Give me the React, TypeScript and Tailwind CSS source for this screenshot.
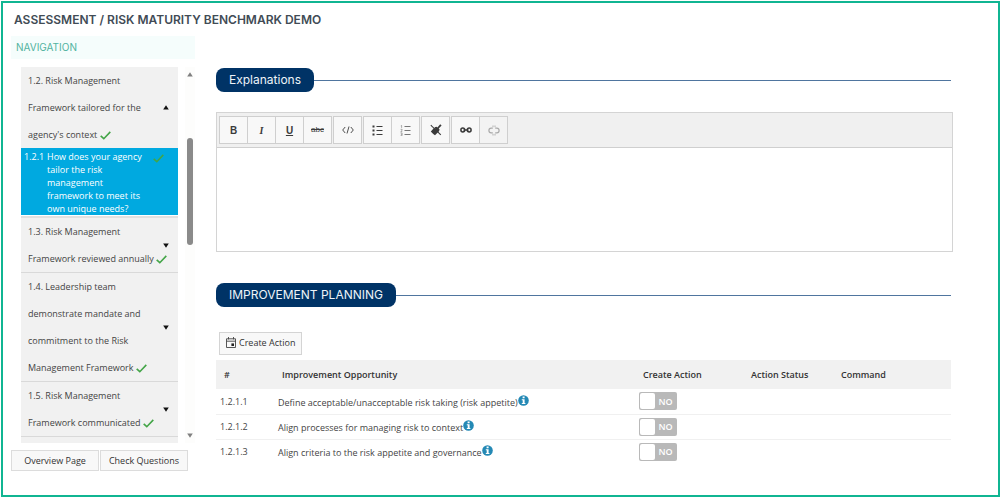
import { useState } from "react";
import type { ReactNode } from "react";

type NavItem = { id: string; lines: string[]; open?: boolean };

const NAV_ITEMS: NavItem[] = [
  { id: "1.3", lines: ["1.3. Risk Management", "Framework reviewed annually"] },
  {
    id: "1.4",
    lines: ["1.4. Leadership team", "demonstrate mandate and", "commitment to the Risk", "Management Framework"],
  },
  { id: "1.5", lines: ["1.5. Risk Management", "Framework communicated"] },
];

const ACTIONS = [
  { id: "1.2.1.1", label: "Define acceptable/unacceptable risk taking (risk appetite)" },
  { id: "1.2.1.2", label: "Align processes for managing risk to context" },
  { id: "1.2.1.3", label: "Align criteria to the risk appetite and governance" },
];

function Check({ className = "" }: { className?: string }) {
  return (
    <svg className={`inline-block shrink-0 ${className}`} width="11" height="9" viewBox="0 0 11 9" fill="none" stroke="#43a547" strokeWidth="1.6">
      <path d="M0.7 4.8 L3.8 7.7 L10.3 0.9" />
    </svg>
  );
}

function Triangle({ up = false, className = "" }: { up?: boolean; className?: string }) {
  return (
    <svg className={`shrink-0 ${className}`} width="6" height="5" viewBox="0 0 6 5" fill="currentColor">
      <path d={up ? "M3 0.3 L5.8 4.5 H0.2 Z" : "M0.2 0.5 H5.8 L3 4.7 Z"} />
    </svg>
  );
}

function NavGroup({ item }: { item: NavItem }) {
  return (
    <button
      type="button"
      aria-expanded={!!item.open}
      className={`flex w-full shrink-0 items-center justify-between bg-[#f1f1f1] pl-[7px] pr-[9px] text-left leading-[27px] text-[#444] ${item.open ? "" : "border-b border-[#d9d9d9]"}`}
    >
      <span className="whitespace-nowrap">
        {item.lines.map((line, i) => (
          <span key={line} className="block">
            {line}
            {i === item.lines.length - 1 && <> <Check /></>}
          </span>
        ))}
      </span>
      <Triangle up={item.open} className="-ml-2 text-[#111]" />
    </button>
  );
}

function SectionTitle({ children }: { children: ReactNode }) {
  return (
    <div className="mr-[2px] flex items-center">
      <h2 className="rounded-lg bg-[#003366] px-[13px] font-['Inter',sans-serif] text-[12px] leading-6 text-[#eef3f8]">
        {children}
      </h2>
      <div className="h-px flex-1 bg-[#4f759f]" />
    </div>
  );
}

function ToolGroup({ children }: { children: ReactNode }) {
  return <div className="flex gap-px border border-[#cfcfcf] bg-[#cfcfcf]">{children}</div>;
}

function Tool({ label, disabled, children }: { label: string; disabled?: boolean; children: ReactNode }) {
  return (
    <button
      type="button"
      aria-label={label}
      disabled={disabled}
      className="flex h-[26px] w-[27px] items-center justify-center bg-[#f8f8f8] text-[#3b3b3b] disabled:bg-[#f3f3f3] disabled:text-[#aaa]"
    >
      {children}
    </button>
  );
}

function Toolbar() {
  return (
    <div className="flex gap-px border-b border-[#cfcfcf] bg-[#f0f0f0] px-[2px] py-[3px]">
      <ToolGroup>
        <Tool label="Bold"><b className="font-['Liberation_Sans',sans-serif] text-[10px]">B</b></Tool>
        <Tool label="Italic"><i className="font-['Liberation_Serif',serif] text-[10px] font-bold">I</i></Tool>
        <Tool label="Underline"><b className="font-['Liberation_Sans',sans-serif] text-[10px] underline">U</b></Tool>
        <Tool label="Strikethrough"><s className="font-['Liberation_Sans',sans-serif] text-[8px]">abc</s></Tool>
      </ToolGroup>
      <ToolGroup>
        <Tool label="View HTML">
          <svg width="12" height="8" viewBox="0 0 12 8" fill="none" stroke="currentColor" strokeWidth="0.9">
            <path d="M3.2 1 L0.7 4 L3.2 7 M8.8 1 L11.3 4 L8.8 7 M7 0.5 L5 7.5" />
          </svg>
        </Tool>
      </ToolGroup>
      <ToolGroup>
        <Tool label="Bulleted list">
          <svg width="11" height="11" viewBox="0 0 11 11" fill="currentColor">
            <path d="M0.5 0.5h2v2h-2z M0.5 4.5h2v2h-2z M0.5 8.5h2v2h-2z M4.5 1h6v1h-6z M4.5 5h6v1h-6z M4.5 9h6v1h-6z" />
          </svg>
        </Tool>
        <Tool label="Numbered list">
          <svg width="11" height="11" viewBox="0 0 11 11" fill="none" stroke="#777">
            <path strokeWidth="0.6" d="M0.8 0.8 L1.6 0.4 V2.9 M0.6 4.3 H2.1 V5.4 L0.7 6.7 H2.3 M0.6 8 H2.1 V10.6 H0.6 M0.9 9.3 H2.1" />
            <path d="M4.5 1.5h6 M4.5 5.5h6 M4.5 9.5h6" />
          </svg>
        </Tool>
      </ToolGroup>
      <ToolGroup>
        <Tool label="Clean formatting">
          <svg width="12" height="12" viewBox="0 0 12 12" fill="currentColor">
            <path d="M10.2 0.3 L11.6 1.6 L8.7 4.5 L9.6 5.5 L9 7.3 L5 11.2 L3.9 10.6 L3 9.8 L2 8.8 L0.8 7.4 L4.7 3.3 L6.5 2.7 L7.4 3.5 Z" />
            <path d="M0.8 1.2 L10.8 10.9" stroke="currentColor" strokeWidth="1.1" />
            <path d="M2 1.2 L5.2 4.3" stroke="#f8f8f8" strokeWidth="0.4" />
          </svg>
        </Tool>
      </ToolGroup>
      <ToolGroup>
        <Tool label="Insert link">
          <svg width="12" height="6" viewBox="0 0 12 6" fill="none" stroke="currentColor" strokeWidth="1.5">
            <circle cx="2.8" cy="3" r="1.9" />
            <circle cx="9.2" cy="3" r="1.9" />
            <path d="M3.6 3 H8.4" />
          </svg>
        </Tool>
        <Tool label="Remove link" disabled>
          <svg width="12" height="11" viewBox="0 0 12 11" fill="none" stroke="currentColor" strokeWidth="1.2">
            <path d="M4.8 3.2 H3.2 A2.3 2.3 0 0 0 3.2 7.8 H4.8 M7.2 3.2 H8.8 A2.3 2.3 0 0 1 8.8 7.8 H7.2" />
            <path d="M5 0.5 V2.2 M7 0.5 V2.2 M5 8.8 V10.5 M7 8.8 V10.5" strokeWidth="0.9" />
          </svg>
        </Tool>
      </ToolGroup>
    </div>
  );
}

function InfoIcon() {
  return (
    <svg className="inline-block align-baseline" width="11" height="11" viewBox="0 0 11 11">
      <circle cx="5.5" cy="5.5" r="5.3" fill="#2489b5" />
      <path fill="#fff" d="M4.6 1.6h2v1.6h-2z M3.8 4.2h2.8v3.7h.8v1.1h-3.6v-1.1h.9v-2.6h-.9z" />
    </svg>
  );
}

function Toggle({ label }: { label: string }) {
  const [on, setOn] = useState(false);
  return (
    <label
      className={`relative flex h-[18px] w-[38px] cursor-pointer items-center rounded-[2px] bg-[#b9b9b9] p-px text-[9px] font-semibold text-white ${on ? "flex-row-reverse" : ""}`}
    >
      <input
        type="checkbox"
        role="switch"
        aria-label={label}
        checked={on}
        onChange={(e) => setOn(e.target.checked)}
        className="absolute inset-0 cursor-pointer opacity-0"
      />
      <span className="h-4 w-[15px] rounded-[2px] bg-white" />
      <span className="flex-1 text-center">{on ? "YES" : "NO"}</span>
    </label>
  );
}

export default function App() {
  const [text, setText] = useState("");

  return (
    <div className="min-h-screen bg-white p-px font-['Open_Sans',sans-serif] text-[9px] text-[#444]">
      <div className="min-h-[495px] border-2 border-[#10b592] pb-6">
        <h1 className="pl-[11px] pt-[7px] font-['Inter',sans-serif] text-[12px] font-semibold leading-5 text-[#414b55]">
          ASSESSMENT / RISK MATURITY BENCHMARK DEMO
        </h1>

        <div className="mt-[6px] flex gap-[21px] pl-2 pr-[45px]">
          {/* Navigation */}
          <nav className="w-[184px] shrink-0">
            <h2 className="bg-[#f5fdfc] pl-[5px] font-['Inter',sans-serif] text-[10px] leading-[23px] text-[#52b3a0]">NAVIGATION</h2>
            <div className="mt-2 flex h-[376px] justify-between pl-[10px]">
              <div className="flex w-[157px] flex-col overflow-hidden">
                <NavGroup
                  item={{ id: "1.2", open: true, lines: ["1.2. Risk Management", "Framework tailored for the", "agency's context"] }}
                />
                <a href="#q121" className="flex shrink-0 items-start bg-[#00a9e0] pl-[3px] pr-[14px] pt-[2px] font-medium text-white">
                  <span className="w-[23px] leading-[13px]">1.2.1</span>
                  <span className="mr-[6px] w-[100px] leading-[13px]">How does your agency tailor the risk management framework to meet its own unique needs?</span>
                  <Check className="mt-1" />
                </a>
                <div className="mt-px h-[2px] shrink-0 bg-[#e0e0e0]" />
                {NAV_ITEMS.map((item) => (
                  <NavGroup key={item.id} item={item} />
                ))}
                <div className="flex-1 bg-[#f1f1f1]" />
              </div>
              {/* Scroll bar */}
              <div className="flex w-[10px] flex-col items-center bg-[#fdfdfc] py-[5px] text-[#808080]">
                <Triangle up />
                <div className="mt-[61px] h-[107px] w-[6px] rounded-full bg-[#8a8a8a]" />
                <Triangle className="mt-auto" />
              </div>
            </div>
            <div className="mt-[7px] flex gap-px text-[#333]">
              <button type="button" className="h-[21px] w-[88px] whitespace-nowrap border border-[#dcdcdc] bg-[#f8f8f8]">Overview Page</button>
              <button type="button" className="h-[21px] w-[88px] whitespace-nowrap border border-[#dcdcdc] bg-[#f8f8f8]">Check Questions</button>
            </div>
          </nav>

          {/* Question details */}
          <main className="min-w-0 flex-1 pt-8">
            <SectionTitle>Explanations</SectionTitle>
            <div className="mt-5 border border-[#d4d4d4]">
              <Toolbar />
              <textarea
                aria-label="Explanations"
                value={text}
                onChange={(e) => setText(e.target.value)}
                className="block h-[103px] w-full resize-none p-2 text-[10px] outline-none"
              />
            </div>

            <div className="mt-[31px]">
              <SectionTitle>IMPROVEMENT PLANNING</SectionTitle>
            </div>
            <button type="button" className="ml-[3px] mt-[25px] flex h-[23px] items-center gap-[3px] border border-[#d4d4d4] bg-[#f8f8f8] px-[6px] pb-[2px] text-[#333]">
              <svg width="10" height="11" viewBox="0 0 10 11" fill="none" stroke="#444" strokeWidth="0.9">
                <path d="M0.5 1.8 H9.5 V10.5 H0.5 Z M0.5 4.2 H9.5 M2.5 0 V2.4 M7.5 0 V2.4" />
                <path fill="#222" stroke="none" d="M5.4 6.4h2.6v2.6h-2.6z" />
              </svg>
              Create Action
            </button>

            <div className="mr-[2px] mt-[5px]">
              <table className="w-full table-fixed border-collapse text-left">
                <colgroup>
                  <col className="w-[56px]" />
                  <col />
                  <col className="w-[108px]" />
                  <col className="w-[90px]" />
                  <col className="w-[120px]" />
                </colgroup>
                <thead>
                  <tr className="h-[29px] bg-[#f1f1f1] text-[#333]">
                    <th className="pl-2 font-semibold">#</th>
                    <th className="px-[10px] font-semibold">Improvement Opportunity</th>
                    <th className="px-[10px] font-semibold">Create Action</th>
                    <th className="px-[10px] font-semibold">Action Status</th>
                    <th className="px-[10px] font-semibold">Command</th>
                  </tr>
                </thead>
                <tbody>
                  {ACTIONS.map((a) => (
                    <tr key={a.id} className="h-[25px] border-b border-[#f0f0f0] last:border-b-0">
                      <td className="pl-1">{a.id}</td>
                      <td className="whitespace-nowrap pl-[6px] pt-px">
                        {a.label}
                        <InfoIcon />
                      </td>
                      <td className="pl-[6px]">
                        <Toggle label={`Create action ${a.id}`} />
                      </td>
                      <td />
                      <td />
                    </tr>
                  ))}
                </tbody>
              </table>
            </div>
          </main>
        </div>
      </div>
    </div>
  );
}
